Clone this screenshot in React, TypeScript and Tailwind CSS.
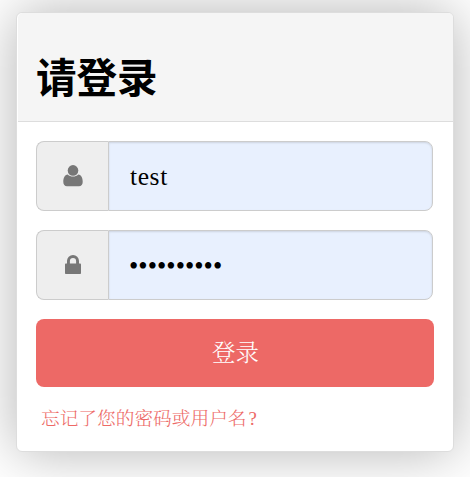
import React from "react";

const serif = "font-['Liberation_Serif','Noto_Serif_CJK_SC','Noto_Sans_CJK_SC',serif]";

function UserIcon() {
  return (
    <svg width="20" height="22" viewBox="0 0 20 22" fill="#777777">
      <circle cx="10" cy="5.4" r="5.3" />
      <path d="M4.800 9.500C1.500 9.700.3 13.200.3 17c0 2.600 1.400 4.200 3.700 4.200h12c2.300 0 3.700-1.600 3.700-4.200 0-3.800-1.200-7.300-4.500-7.500-1.300 1.400-3.100 2-5.200 2s-3.900-.6-5.200-2z" />
    </svg>
  );
}

function LockIcon() {
  return (
    <svg className="-mt-0.5" width="16" height="19" viewBox="0 0 16 19" fill="#777777">
      <path
        fillRule="evenodd"
        d="M2 8.500V6.100a6 6 0 0 1 12 0v2.400h.9c.7 0 1.100.4 1.100 1.100v8.300c0 .7-.4 1.100-1.100 1.100H1.100C.4 19 0 18.600 0 17.900V9.600c0-.7.4-1.100 1.100-1.100zM4.900 8.500h6.200V6.100a3.100 3.100 0 0 0-6.200 0z"
      />
    </svg>
  );
}

function Field({ icon, children }: { icon: React.ReactNode; children: React.ReactNode }) {
  return (
    <div className="flex h-[70px] w-[397px]">
      <div className="flex w-[72px] shrink-0 items-center justify-center rounded-l-lg border border-r-0 border-[#cccccc] bg-[#eeeeee]">
        {icon}
      </div>
      <div className="flex min-w-0 flex-1 items-center rounded-r-lg border border-[#cccccc] bg-[#e8f0fe] pl-5 text-black shadow-[inset_0_1px_2px_rgba(0,0,0,0.12)]">
        {children}
      </div>
    </div>
  );
}

export default function App() {
  return (
    <div className={`h-[477px] w-[470px] overflow-hidden bg-white pt-3 pl-4 ${serif}`}>
      <div className="h-[440px] w-[438px] rounded-md border border-[#dddddd] bg-white shadow-[0_0_56px_rgba(0,0,0,0.3)]">
        <div className="ml-px h-[109px] rounded-t-[5px] border-b border-[#dddddd] bg-[#f5f5f5] pt-[33px] pl-[18px]">
          <h1 className="font-['Noto_Sans_CJK_SC',sans-serif] text-[40.500px] leading-[60px] font-bold text-black">请登录</h1>
        </div>
        <form className="flex flex-col pt-[19px] pl-[19px]">
          <Field icon={<UserIcon />}>
            <span className="pt-px pl-px text-[25.500px] leading-none tracking-[0.6px]">test</span>
          </Field>
          <div className="h-[19px]" />
          <Field icon={<LockIcon />}>
            <span className="pt-[3px] font-['Liberation_Serif',serif] text-[26.500px] leading-none tracking-[0.050px]">••••••••••</span>
          </Field>
          <button type="button" className="mt-[19px] h-[68px] w-[398px] rounded-lg bg-[#ed6966] pt-0.5 pl-px text-[23.500px] font-light text-white">
            登录
          </button>
          <a className="mt-[17px] pl-[5px] text-[18.700px] leading-[30px] font-light text-[#ed6966]">
            忘记了您的密码或用户名<span className="pl-0.5">?</span>
          </a>
        </form>
      </div>
    </div>
  );
}
